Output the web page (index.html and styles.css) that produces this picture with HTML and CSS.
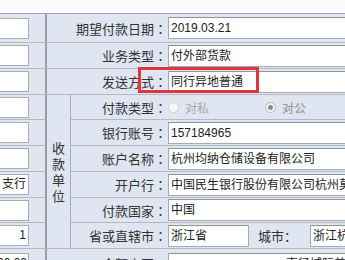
FILE: index.html
```html
<!DOCTYPE html>
<html lang="zh-CN">
<head>
<meta charset="utf-8">
<link rel="stylesheet" href="styles.css">
</head>
<body>
<div class="page">
  <div class="topband"></div>
  <div class="form">
    <div class="left"><span class="lbox"></span></div>
    <div class="label wide">期望付款日期<span class="colon">：</span></div>
    <div class="field"><span class="input">2019.03.21</span></div>

    <div class="left"><span class="lbox"></span></div>
    <div class="label wide">业务类型<span class="colon">：</span></div>
    <div class="field"><span class="input">付外部货款</span></div>

    <div class="left"><span class="lbox"></span></div>
    <div class="label wide">发送方式<span class="colon">：</span></div>
    <div class="field"><span class="input">同行异地普通</span></div>

    <div class="left"><span class="lbox"></span></div>
    <div class="group">
      <span class="vtext"><span class="vch">收</span><span class="vch">款</span><span class="vch">单</span><span class="vch">位</span></span>
    </div>
    <div class="label">付款类型<span class="colon">：</span></div>
    <div class="field radios">
      <span class="ritem off"><span class="radio"></span>对私</span>
      <span class="ritem"><span class="radio checked"></span>对公</span>
    </div>

    <div class="left"><span class="lbox"></span></div>
    <div class="label">银行账号<span class="colon">：</span></div>
    <div class="field"><span class="input">157184965</span></div>

    <div class="left"><span class="lbox"></span></div>
    <div class="label">账户名称<span class="colon">：</span></div>
    <div class="field"><span class="input">杭州均纳仓储设备有限公司</span></div>

    <div class="left"><span class="lbox right">支行</span></div>
    <div class="label">开户行<span class="colon">：</span></div>
    <div class="field"><span class="input">中国民生银行股份有限公司杭州莫干山支行</span></div>

    <div class="left"><span class="lbox"></span></div>
    <div class="label">付款国家<span class="colon">：</span></div>
    <div class="field"><span class="input">中国</span></div>

    <div class="left"><span class="lbox right">1</span></div>
    <div class="label">省或直辖市<span class="colon">：</span></div>
    <div class="field">
      <span class="input short">浙江省</span>
      <span class="sublabel">城市<span class="colon">：</span></span>
      <span class="input">浙江杭州</span>
    </div>

    <div class="left"><span class="lbox right">00.00</span></div>
    <div class="label wide">金额小写<span class="colon">：</span></div>
    <div class="field"><span class="input"><span class="lastval">直径城际普通</span></span></div>
  </div>
  <div class="highlight"></div>
</div>
</body>
</html>
```

FILE: styles.css
```css
html, body {
  margin: 0;
  padding: 0;
  width: 345px;
  height: 260px;
  overflow: hidden;
  background: #ffffff;
}

.page {
  position: relative;
  width: 345px;
  height: 260px;
  overflow: hidden;
  font-family: "Noto Sans CJK SC", "Liberation Sans", sans-serif;
  color: #333333;
}

.topband {
  height: 13px;
  background: #fbfbfc;
}

.form {
  width: 460px;
  display: grid;
  grid-template-columns: 47px 24px 97px 1fr;
  grid-template-rows: 29px 26px 26px 25px 26px 26px 26px 25px 26px 30px;
  border-top: 1px solid #9fa4ac;
  background: #dfe5f1;
}

.form > div {
  box-sizing: border-box;
  border-bottom: 1px solid #b3b8c1;
  display: flex;
  align-items: center;
}

.left {
  grid-column: 1;
  border-right: 2px solid #9a9ea4;
}

.lbox {
  box-sizing: border-box;
  margin-left: -6px;
  width: 35px;
  height: 21px;
  background: #ffffff;
  border: 1px solid #a8adb5;
  font-family: "Liberation Sans", "Noto Sans CJK SC", sans-serif;
  font-size: 12px;
  line-height: 19px;
  color: #222222;
  padding: 0 2px;
  white-space: nowrap;
  overflow: hidden;
}

.lbox.right {
  text-align: right;
}

.group {
  grid-column: 2;
  grid-row: 4 / span 6;
  border-right: 1px solid #a9aeb6;
  justify-content: center;
}

.vtext {
  display: flex;
  flex-direction: column;
  align-items: center;
}

.vch {
  display: block;
  height: 16px;
  font-size: 13px;
  line-height: 16px;
  color: #333333;
}

.label {
  grid-column: 3;
  justify-content: flex-end;
  padding-right: 1px;
  font-size: 13px;
  color: #333333;
  white-space: nowrap;
}

.label.wide {
  grid-column: 2 / span 2;
}

.colon {
  font-family: "Noto Sans CJK TC", "Noto Sans CJK SC", sans-serif;
}

.field {
  grid-column: 4;
  white-space: nowrap;
}

.input {
  box-sizing: border-box;
  display: inline-block;
  width: 300px;
  height: 22px;
  background: #ffffff;
  border: 1px solid #a6abb3;
  border-top-color: #8f949c;
  padding: 0 2px;
  font-family: "Liberation Sans", "Noto Sans CJK SC", sans-serif;
  font-size: 12px;
  line-height: 20px;
  color: #222222;
  overflow: hidden;
  white-space: nowrap;
}

.input.short {
  width: 81px;
}

.sublabel {
  display: inline-block;
  margin-left: 9px;
  width: 52px;
  font-size: 13px;
  color: #333333;
}

.lastval {
  display: inline-block;
  margin-left: 115px;
}

.radios {
  gap: 0;
}

.ritem {
  display: inline-flex;
  align-items: center;
  width: 97px;
  font-size: 12px;
  color: #8e8e8e;
}

.ritem.off {
  color: #a9a9a9;
}

.radio {
  box-sizing: border-box;
  width: 11px;
  height: 11px;
  border-radius: 50%;
  border: 1px solid #b9b9b9;
  background: #f3f3f3;
  margin-right: 6px;
  display: inline-flex;
  align-items: center;
  justify-content: center;
}

.ritem.off .radio {
  border-color: #d0d0d0;
  background: #f6f6f6;
}

.radio.checked::after {
  content: "";
  width: 5px;
  height: 5px;
  border-radius: 50%;
  background: #8c8c8c;
}

.highlight {
  position: absolute;
  left: 138px;
  top: 67px;
  width: 121px;
  height: 26px;
  box-sizing: border-box;
  border: 3px solid #e0353a;
}
```
